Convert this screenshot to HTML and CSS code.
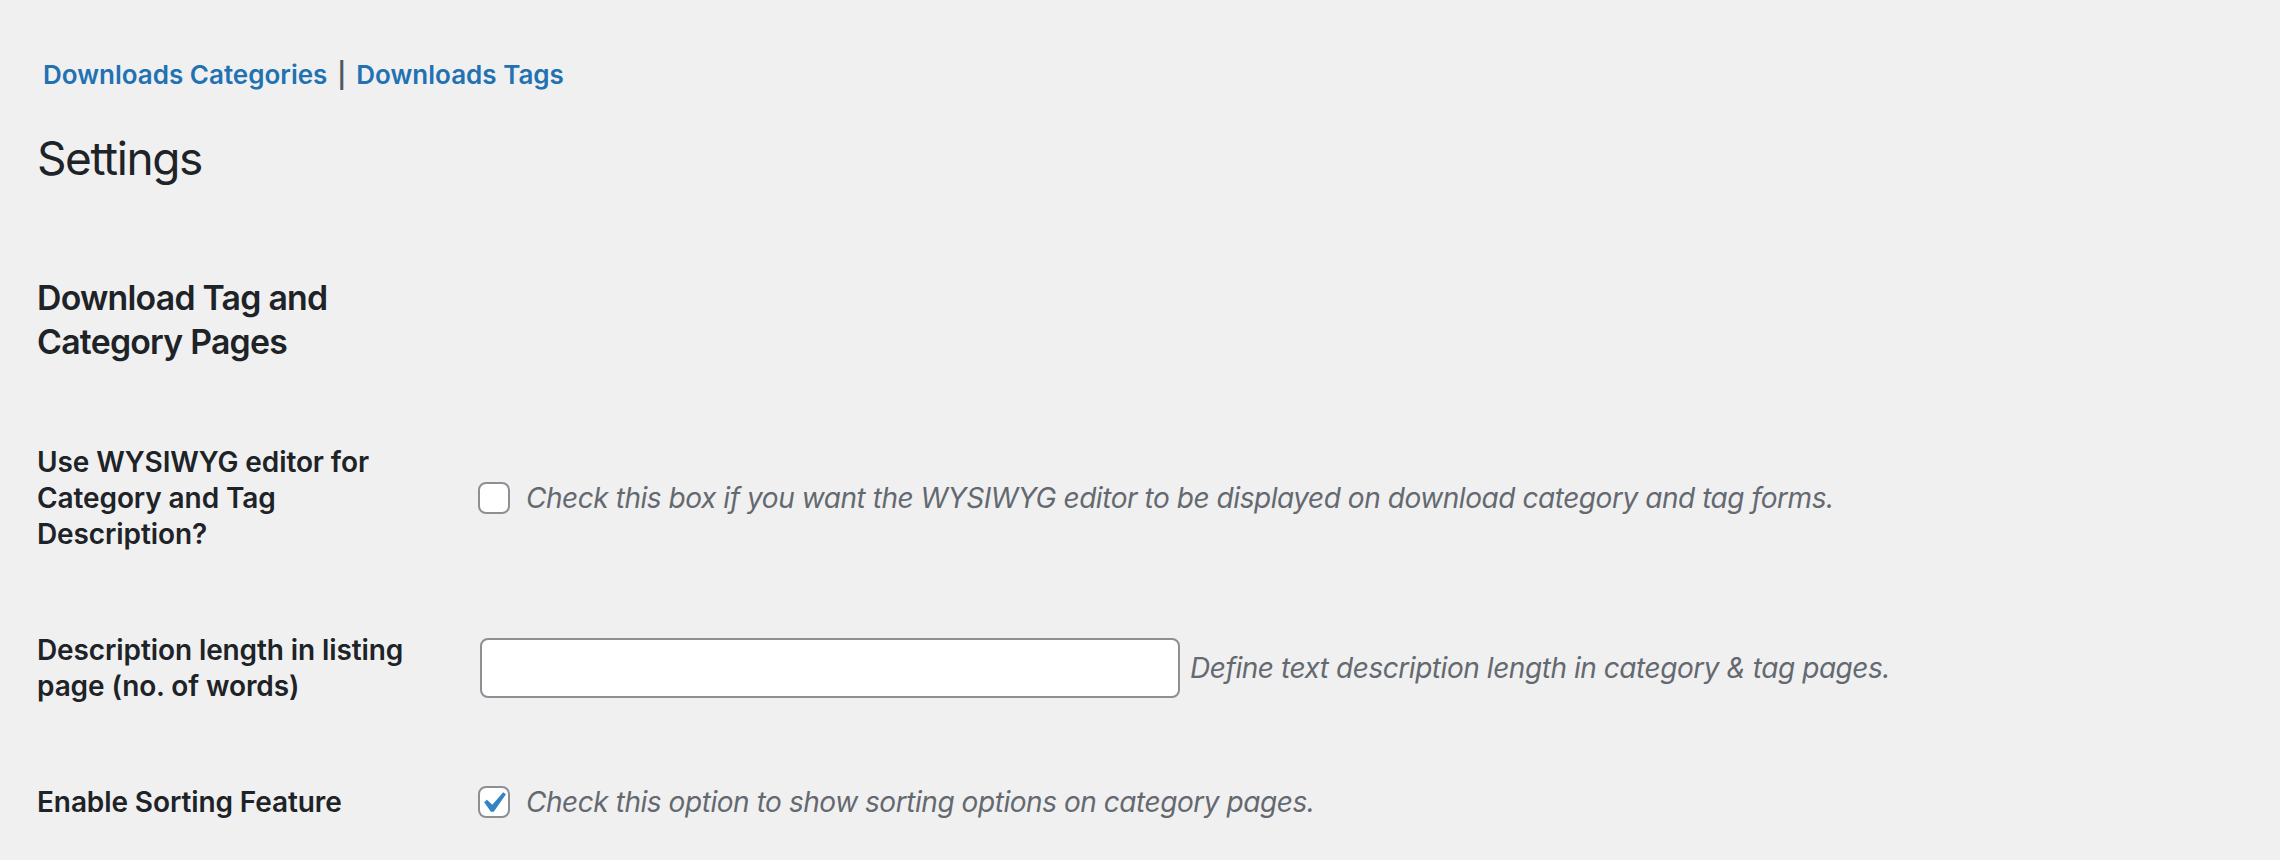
FILE: index.html
```html
<!DOCTYPE html>
<html lang="en">
<head>
<meta charset="utf-8">
<title>Settings</title>
<link rel="stylesheet" href="styles.css">
</head>
<body>
<div class="wrap">
  <nav class="subnav">
    <a href="#" class="subnav-link">Downloads Categories</a>
    <span class="sep">|</span>
    <a href="#" class="subnav-link">Downloads Tags</a>
  </nav>
  <h1 class="page-title">Settings</h1>
  <h2 class="section-title">Download Tag and Category Pages</h2>
  <div class="form-table">
    <div class="row">
      <div class="label">Use WYSIWYG editor for Category and Tag Description?</div>
      <div class="field">
        <span class="checkbox"></span>
        <span class="description">Check this box if you want the WYSIWYG editor to be displayed on download category and tag forms.</span>
      </div>
    </div>
    <div class="row">
      <div class="label">Description length in listing page (no. of words)</div>
      <div class="field">
        <span class="text-input"></span>
        <span class="description desc-after-input">Define text description length in category &amp; tag pages.</span>
      </div>
    </div>
    <div class="row">
      <div class="label">Enable Sorting Feature</div>
      <div class="field">
        <span class="checkbox checked"><svg viewBox="0 0 20 20" width="42" height="42" aria-hidden="true"><path d="M14.83 4.89l1.34.94-5.81 8.38H9.020L5.78 9.67l1.34-1.25 2.57 2.4z" fill="#3582c4"/></svg></span>
        <span class="description">Check this option to show sorting options on category pages.</span>
      </div>
    </div>
  </div>
</div>
</body>
</html>
```

FILE: styles.css
```css
html, body {
  margin: 0;
  padding: 0;
  background: #f0f0f1;
}
body {
  font-family: Inter, "Noto Sans", "Liberation Sans", sans-serif;
  color: #1d2327;
  width: 2280px;
  height: 860px;
  overflow: hidden;
}
.wrap {
  padding-left: 37px;
  padding-top: 57px;
}
.subnav {
  display: flex;
  align-items: center;
  gap: 10px;
  margin-left: 6px;
  font-size: 26px;
  line-height: 36px;
  height: 36px;
}
.subnav-link {
  color: #2271b1;
  font-weight: 600;
  text-decoration: none;
}
.sep {
  color: #50575e;
  font-weight: 600;
  font-size: 25px;
}
.page-title {
  margin: 36px 0 0;
  font-size: 46px;
  font-weight: 400;
  letter-spacing: -1.4px;
  line-height: 1.3;
}
.section-title {
  margin: 87px 0 0;
  font-size: 33.8px;
  font-weight: 600;
  letter-spacing: -0.75px;
  line-height: 1.3;
  width: 400px;
}
.form-table {
  margin-top: 40px;
}
.row {
  display: flex;
  align-items: center;
  padding: 40px 0;
}
.label {
  flex: 0 0 400px;
  padding-right: 20px;
  font-size: 28px;
  font-weight: 600;
  letter-spacing: -0.1px;
  line-height: 36px;
}
.field {
  display: flex;
  align-items: center;
  padding-left: 21px;
}
.checkbox {
  position: relative;
  width: 32px;
  height: 32px;
  box-sizing: border-box;
  border: 2px solid #8c8f94;
  border-radius: 8px;
  background: #fff;
  margin-right: 16px;
  flex: 0 0 auto;
}
.checkbox svg {
  position: absolute;
  left: -8px;
  top: -6px;
}
.description {
  font-size: 28px;
  font-style: italic;
  letter-spacing: -0.45px;
  color: #646970;
  line-height: 36px;
}
.text-input {
  display: block;
  width: 700px;
  height: 60px;
  box-sizing: border-box;
  border: 2px solid #8c8f94;
  border-radius: 8px;
  background: #fff;
  margin-left: 2px;
}
.desc-after-input {
  margin-left: 10px;
}
```
